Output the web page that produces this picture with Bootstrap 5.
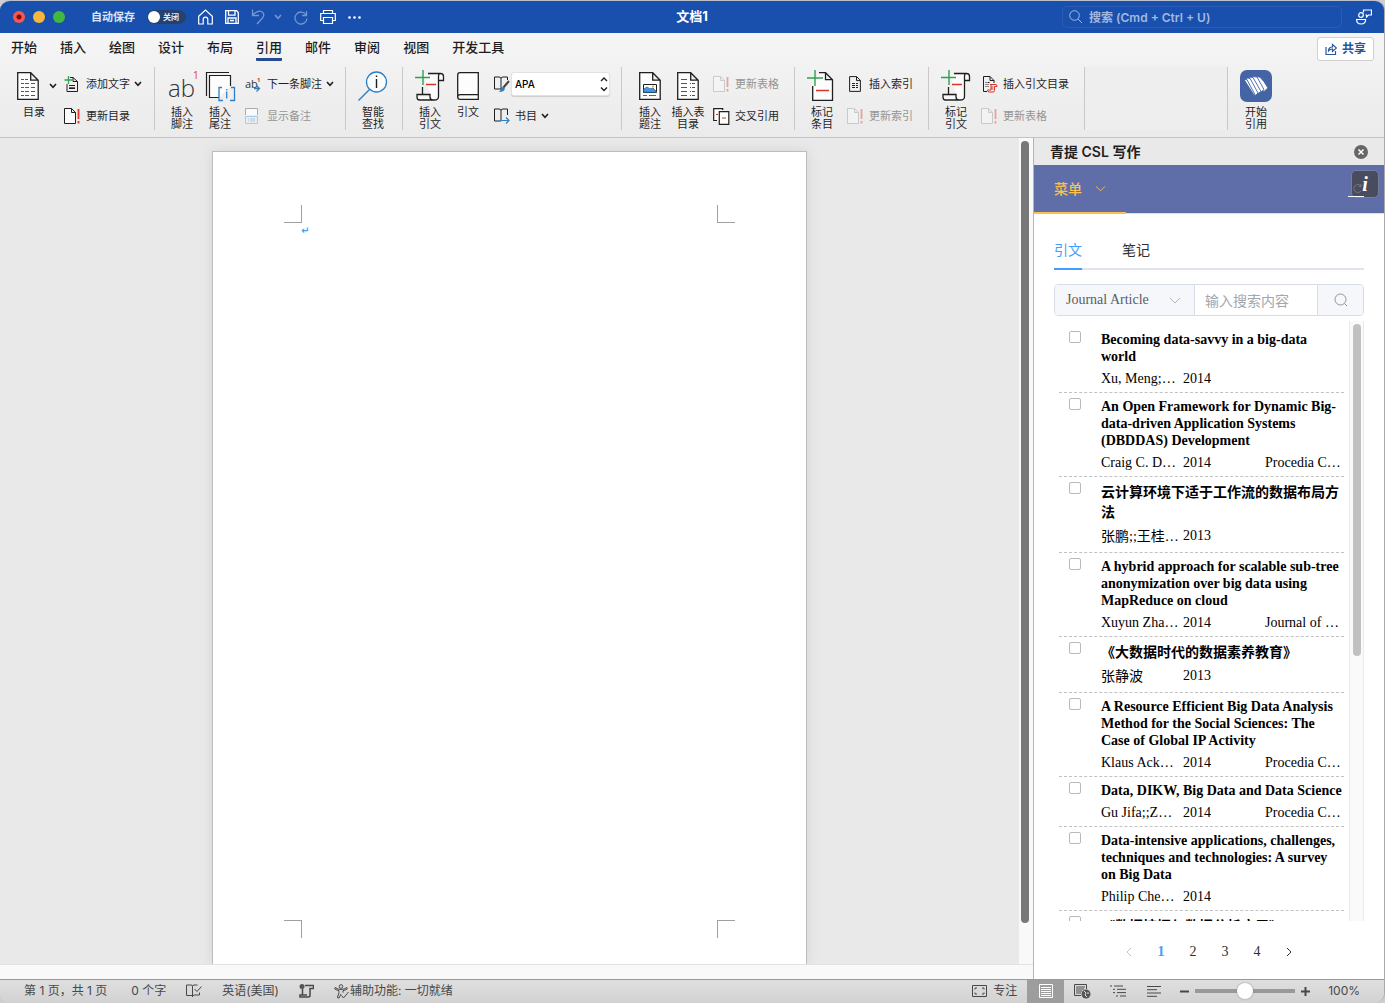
<!DOCTYPE html>
<html lang="zh-CN">
<head>
<meta charset="utf-8">
<meta name="viewport" content="width=device-width, initial-scale=1">
<title>文档1</title>
<link href="https://cdn.jsdelivr.net/npm/bootstrap@5.3.0/dist/css/bootstrap.min.css" rel="stylesheet">
<style>
:root{--ink:#1f1f1f;--rule:#c9c9c9;--ui:Inter,"Noto Sans CJK SC",sans-serif;--pane:"Liberation Serif","Noto Sans CJK SC",serif}
body{font-family:var(--ui);font-size:11px;color:var(--ink);background:#cfcfcf}
svg{display:block;flex:none;fill:none}
svg:not([stroke]){stroke:currentColor}
.btn{--bs-btn-padding-x:0;--bs-btn-padding-y:0;--bs-btn-border-width:0;--bs-btn-font-size:inherit;--bs-btn-line-height:inherit;--bs-btn-color:inherit;--bs-btn-disabled-color:#949494;--bs-btn-disabled-opacity:1;--bs-btn-font-weight:inherit}
.window{height:100vh;min-height:600px;border-radius:10px;overflow:hidden;border-top:1px solid #b9c0cc;border-right:1px solid #a9a9a9}
/* title bar */
.titlebar{height:32px;background:#1950ae;color:#fff;flex:none}
.bar-side{flex:1 1 0;min-width:0}
.titlebar strong{font-size:13px}
.light{width:12px;height:12px;border-radius:50%}
.light-r{background:radial-gradient(#7c0f0b 2px,#f6574e 3px)}
.light-y{background:#f9b63c}
.light-g{background:#43b83e}
.lights{padding-left:13px;gap:8px}
.autosave{color:#dbe5f6;font-weight:600;gap:12px;margin-left:26px}
.toggle{width:39px;height:14px;border-radius:7px;background:#25426f;font-size:8px;line-height:14px;padding-left:16px;color:#e6ecf6}
.toggle input{appearance:none;position:absolute;left:1px;top:1px;width:12px;height:12px;border-radius:50%;background:#fff;margin:0}
.qat{gap:12px}
.dim{opacity:.4}
.find{width:280px;height:22px;border:1px solid #2a5cb4;border-radius:5px;gap:6px;padding-left:6px;color:#a3b9df;margin-right:14px}
.find input{border:0;background:none;outline:0;color:inherit;font-size:12px;font-weight:600;width:100%;padding:1px 0 0}
.find input::placeholder{color:#a3b9df;opacity:1}
.account{margin-right:12px}
/* ribbon */
.ribbon{background:linear-gradient(#f5f5f5,#ebebeb);border-bottom:1px solid #c4c4c4;flex:none}
.tabs{height:29px;gap:23px;padding-left:11px;font-size:13px;font-weight:500}
.tabs a{color:#1d1d1d;text-decoration:none;white-space:nowrap;border-bottom:3px solid transparent;height:28px;display:block;line-height:28px}
.tabs a.active{border-bottom-color:#274a8e;border-radius:1px}
.share{width:57px;height:24px;background:#fff;border:1px solid #d0d0d0;border-radius:3px;color:#2b5599;font-size:12px;font-weight:600;gap:5px;margin:3px 10px 0 0}
.tools{padding-top:5px;height:75px}
.tgroup{flex:none;align-items:flex-start;gap:6px;border-right:1px solid var(--rule);padding:0 15px 0 8px;height:63px}
.tgroup.menus{padding-right:11px}
.tgroup.solo{padding-right:10px}
.tgroup.first{padding:0 12px 0 17px;gap:8px}
.tgroup.styles{padding-right:11px}
.tgroup.captions{padding-left:9px}
.tgroup.last{border:0;padding-left:9px}
.tgroup.blank{width:143px;background:#eee}
.big{width:38px;line-height:12px;text-align:center}
.big.wide{width:39px}
.pic{height:38px;display:flex;align-items:center;justify-content:center;margin-bottom:1px}
.wide .pic{gap:10px}
.wide .cap{display:block;text-align:left;padding-left:6px}
.duo{padding-top:1px}
.cell{height:32px;line-height:16px;white-space:nowrap;display:flex;align-items:center}
.cell .ico{width:22px;flex:none}
.cell .chev{margin-left:4px}
.combo{width:99px;height:24px;border:1px solid #e2e2e2;border-radius:3px;background:#fff;box-shadow:0 1px 1px #ccc;margin-left:-4px}
.combo select{appearance:none;border:0;background:none;width:100%;height:100%;padding:0 3px;font-size:10px;font-weight:500;color:#000}
.combo svg{position:absolute;right:1px;top:4px;pointer-events:none}
.launch{width:32px;height:32px;border-radius:7px;background:#4464a5;display:flex;align-items:center;justify-content:center}
/* document */
.canvas-area{background:#e9e9e9;overflow:hidden}
.sheet{width:595px;background:#fff;border:1px solid #bdbdbd;border-bottom:0;margin-top:13px;padding:53px 71px 26px;box-shadow:0 0 12px #d4d4d4}
.crop{width:18px;height:18px;border:0 solid #a0a0a0}
.crop.tl{border-width:0 1px 1px 0}
.crop.tr{border-width:0 0 1px 1px}
.crop.bl{border-width:1px 1px 0 0}
.crop.br{border-width:1px 0 0 1px}
.pilcrow{font:bold 10px/15px "DejaVu Sans",sans-serif;color:#4b9cf5;padding-left:17px}
.vbar{width:14px;background:#f9f9f9;padding:3px 4px 0 2px;flex:none}
.vthumb{height:95%;border-radius:4px;background:#787878}
.hbar{height:15px;background:#f9f9f9;border-top:1px solid #e2e2e2;flex:none}
/* side pane */
.side{width:351px;flex:none;border-left:1px solid #b5b5b5;background:#fff;font-family:var(--pane);font-size:14px}
.side-head{height:27px;background:#e9e9e9;font-family:var(--ui);padding:0 16px;font-weight:600}
.side-head h1{font-size:14px;font-weight:600;margin:0;padding-top:1px}
.menu{height:49px;background:#5f6da9;border-bottom:1px solid #dcdfe8;position:relative;flex:none}
.menu .btn{color:#fdc04c;height:49px;width:92px;border-bottom:2px solid #fdc04c;border-radius:0;gap:13px;padding:1px 0 0 20px;font-weight:500}
.info{position:absolute;right:5px;top:5px;width:28px;height:28px;border:1px solid #777d9c;border-radius:5px;background:#494c5f;color:#fff;font:italic bold 20px/26px "Liberation Serif",serif;text-align:center;padding:0}
.info::before{content:"";position:absolute;left:-4px;bottom:0;width:16px;height:1px;background:#fff}
.info svg{position:absolute;left:0;top:13px;color:#777}
.pane-tabs{margin:20px 20px 0;height:36px;gap:40px;border-bottom:2px solid #dfe4ed;line-height:34px;flex:none}
.pane-tabs a{color:#303133;text-decoration:none;height:36px}
.pane-tabs a.active{color:#409eff;border-bottom:2px solid #409eff}
.query{margin:14px 20px 5px;height:32px;border:1px solid #d8dce6;border-radius:4px;overflow:hidden;flex:none}
.query .kind{width:140px;background:#f5f7fa;border-right:1px solid #d8dce6;color:#606266}
.kind select{appearance:none;border:0;background:none;width:100%;height:30px;padding:0 11px 2px;color:#5b5d62;font-size:14px}
.kind svg{position:absolute;right:13px;top:12px;pointer-events:none;color:#b4b8c0}
.query input{border:0;min-width:0;flex:1;padding:2px 10px 0;outline:0}
.query input::placeholder{color:#a3a6ad;opacity:1}
.query .btn{width:46px;background:#f5f7fa;border-left:1px solid #d8dce6;border-radius:0;color:#909399}
.results{margin:0 20px;min-height:0;overflow:hidden;flex:1}
.entries{padding:5px 5px 0;flex:1;min-width:0;list-style:none;margin:0}
.entry{border-bottom:1px dashed #c2c2c2;padding:5px 0 5px 10px;gap:20px;color:#000;line-height:17px}
.entry>div{flex:1;min-width:0}
.entry input{appearance:none;width:12px;height:12px;border:1px solid #b9b9b9;border-radius:2px;flex:none;margin:0;background:#fff}
.entry h2{font-size:14px;line-height:17px;font-weight:700;margin:0 0 5px}
.entry .facts span{width:82px;flex:none;white-space:nowrap}
.zh h2{line-height:20px;padding-top:1px;margin-bottom:4px}
.zh .facts span:first-child{line-height:20px}
.strack{width:15px;border:1px solid #ebebeb;border-width:0 1px;background:#fafafa;padding:3px 3px 0;flex:none}
.sthumb{height:332px;border-radius:4px;background:#c1c1c1;width:8px}
.pages{height:58px;flex:none;padding-top:3px}
.pages a{width:32px;line-height:28px;text-align:center;color:#303133;text-decoration:none;display:flex;justify-content:center;align-items:center}
.pages a.active{color:#409eff;font-weight:700}
/* status bar */
.status{height:24px;border-top:1px solid #999;background:linear-gradient(#dfdfdf,#d2d2d2);color:#484848;font-size:12px;line-height:22px;flex:none;white-space:nowrap;padding:0 24px}
.status>div{height:22px}
.counts{gap:20px}
.view{width:36px;height:23px;display:flex;align-items:center;justify-content:center}
.view.active{width:37px;background:#9d9d9d;color:#fff;border-radius:0}
.focus-view{gap:6px;margin-right:10px}
.zoomer{appearance:none;width:100px;height:16px;background:linear-gradient(#999,#999) center/100% 4px no-repeat;border-radius:2px;margin:0}
.zoomer::-webkit-slider-thumb{appearance:none;width:16px;height:16px;border-radius:50%;background:#fff;box-shadow:0 0 2px #888}
</style>
<script src="https://cdn.jsdelivr.net/npm/bootstrap@5.3.0/dist/js/bootstrap.bundle.min.js"></script>
</head>
<body>
<svg class="d-none">
  <symbol id="chev" viewBox="0 0 8 6"><path d="M1 1l3 3.400l3-3.400" stroke-width="1.600"/></symbol>
  <symbol id="thin-chev" viewBox="0 0 12 8"><path d="M1 1l5 5 5-5"/></symbol>
  <symbol id="update" viewBox="0 0 17 17"><path d="M.5.5h7l4 4v11H.500zM7.500.500v4h4" fill="#fbfbfb"/><path d="M14.500 1v10m0 2v2.500" stroke="#e8322b" stroke-width="1.800"/></symbol>
  <symbol id="scroll" viewBox="0 0 30 32"><path d="M8.500 4.500h17q3 0 3 3v4h-5V27q0 4.500-4 4.500H5q-3 0-3-3v-2h13v2.500q0 2.500 3 2.500" fill="#fbfbfb" stroke="none"/><path d="M13 3.500h12.500q3 0 3 3v4h-5v-4q0-3 2-3M23.500 10V26.500q0 3.500-4 3.500H4.500Q2 30 2 27v-2.500h13V27q0 3 3 3M7.500 17v7.500" stroke-width="1.300"/><path d="M8 0v15M0 7.500h15" stroke="#2fa04e" stroke-width="1.400"/><path d="M11 14.500h10" stroke="#d9342b" stroke-width="1.300"/></symbol>
  <symbol id="book" viewBox="0 0 18 18"><path d="M8 14H1.500V2H6q2 0 2 1.500V14M8 3.500Q8 2 10 2h4.500v3"/></symbol>
</svg>
<div class="window d-flex flex-column">
  <header class="titlebar d-flex align-items-center">
    <div class="bar-side d-flex align-items-center">
      <div class="lights d-flex align-items-center">
        <button class="btn light light-r" aria-label="关闭窗口"></button><button class="btn light light-y" aria-label="最小化"></button><button class="btn light light-g" aria-label="缩放"></button>
      </div>
      <label class="autosave d-flex align-items-center" for="auto"><span>自动保存</span><span class="toggle position-relative"><input type="checkbox" id="auto">关闭</span></label>
      <div class="qat d-flex align-items-center ms-2 ps-1">
        <button class="btn" aria-label="主页"><svg width="15" height="16" viewBox="0 0 15 16" stroke-width="1.200"><path d="M.700 7.200L7.500 1l6.800 6.200V15h-4.500v-4.500q0-2.300-2.300-2.300t-2.300 2.300V15H.700z"/></svg></button>
        <button class="btn" aria-label="保存"><svg width="14" height="14" viewBox="0 0 14 14" stroke-width="1.300"><path d="M.700.700h10.800l1.800 1.800v10.800H.700zM3.500.700v4.500h6.500V.700M3 13.300V8h8v5.300M5 10.500h4"/></svg></button>
        <button class="btn dim d-flex align-items-center" aria-label="撤消"><svg width="15" height="16" viewBox="0 0 15 16" stroke-width="1.300"><path d="M1.500.500v6h6.500M1.500 6Q7 1 10.500 2.500 14.500 5 11.500 9L6 15"/></svg><svg class="ms-2" width="8" height="6"><use href="#chev"/></svg></button>
        <button class="btn dim" aria-label="重做"><svg width="14" height="15" viewBox="0 0 14 15" stroke-width="1.300"><path d="M12.500 1v4.500H8M12.200 5A6 6 0 1 0 13 8.500"/></svg></button>
        <button class="btn" aria-label="打印"><svg width="16" height="14" viewBox="0 0 16 14" stroke-width="1.200"><path d="M3.500 3.500v-3h9v3M3.500 10.500H.700v-7h14.600v7h-2.800M3.500 7.500h9v6h-9z"/></svg></button>
        <button class="btn" aria-label="更多"><svg width="13" height="3" viewBox="0 0 13 3" stroke="none"><g fill="#fff"><circle cx="1.500" cy="1.500" r="1.300"/><circle cx="6.500" cy="1.500" r="1.300"/><circle cx="11.500" cy="1.500" r="1.300"/></g></svg></button>
      </div>
    </div>
    <strong>文档1</strong>
    <div class="bar-side d-flex align-items-center justify-content-end">
      <label class="find d-flex align-items-center"><svg width="14" height="14" viewBox="0 0 14 14"><circle cx="5.500" cy="5.500" r="4.800"/><path d="M9 9l4 4"/></svg><input type="search" placeholder="搜索 (Cmd + Ctrl + U)" aria-label="搜索"></label>
      <button class="btn account" aria-label="账户"><svg width="16" height="16" viewBox="0 0 16 16" stroke-width="1.200"><circle cx="5" cy="6" r="2.300"/><path d="M.600 10.500h9q0 4.500-4.500 4.500T.600 10.500zM7.500 3.500V1h8v5h-3l-2 2V6H9.500"/></svg></button>
    </div>
  </header>

  <div class="ribbon">
    <div class="d-flex justify-content-between align-items-center">
      <nav class="tabs d-flex">
        <a href="#">开始</a><a href="#">插入</a><a href="#">绘图</a><a href="#">设计</a><a href="#">布局</a><a href="#" class="active">引用</a><a href="#">邮件</a><a href="#">审阅</a><a href="#">视图</a><a href="#">开发工具</a>
      </nav>
      <button class="btn share d-flex align-items-center justify-content-center"><svg width="12" height="12" viewBox="0 0 12 12"><path d="M1 4v7.500h9.500V8M3.500 8q0-4 4-4V1.500l4 3.500-4 3.500V6q-2.500 0-4 2z" stroke-width="1.200"/></svg>共享</button>
    </div>
    <div class="tools d-flex overflow-hidden">
      <div class="tgroup first d-flex">
        <button class="btn big wide"><span class="pic"><svg width="22" height="28" viewBox="0 0 22 28"><path d="M.700.700h13l7.500 7.500V27.300H.700zM13.700.700v7.500h7.500" fill="#fdfdfd" stroke-width="1.300"/><path d="M4 7.500h3m1 0h3M4 11.500h3m1 0h4m2 0h4M4 15.500h3m1 0h4m2 0h4M4 19.500h3m1 0h4m2 0h4M4 23.500h3m1 0h4m2 0h4" stroke="#555"/></svg><svg width="8" height="6"><use href="#chev"/></svg></span><span class="cap">目录</span></button>
        <div class="duo">
          <button class="btn cell"><span class="ico"><svg width="17" height="18" viewBox="0 0 17 18"><path d="M6 2.500h3l4.500 4V16.500H3V9M9 2.500v4h4.500M5 10.500h6M5 13.500h6"/><path d="M4.500 1v8M.500 5h8" stroke="#2fa04e" stroke-width="1.300"/><path d="M5 12.500h6" stroke="#2b6cc0"/></svg></span>添加文字<svg class="chev" width="8" height="6"><use href="#chev"/></svg></button>
          <button class="btn cell"><span class="ico"><svg width="17" height="17"><use href="#update"/></svg></span>更新目录</button>
        </div>
      </div>
      <div class="tgroup menus d-flex">
        <div class="d-flex align-items-start">
          <button class="btn big"><span class="pic"><svg width="34" height="38" viewBox="0 0 34 38" stroke="none"><text x="3" y="30" font-family="Open Sans" font-weight="300" font-size="24" fill="#333">ab</text><text x="28" y="12" font-family="Open Sans" font-size="10" fill="#e03a30">1</text></svg></span>插入<br>脚注</button>
          <button class="btn big"><span class="pic"><svg width="32" height="32" viewBox="0 0 32 32"><path d="M2.500 26V2.500H25" stroke-width="1.200"/><path d="M15 27.500H5.500v-22h21V16" fill="#fdfdfd" stroke-width="1.200"/><path d="M18 17.500h-3v13h4m8-13h3.500v13H26" stroke="#2f80c3" stroke-width="1.300"/><path d="M22.700 21.500v7m0-9.500v1.300" stroke="#2f80c3" stroke-width="1.300"/></svg></span>插入<br>尾注</button>
        </div>
        <div class="duo">
          <button class="btn cell"><span class="ico"><svg width="17" height="18" viewBox="0 0 17 18" stroke="none"><text x="0" y="13" font-family="Open Sans" font-size="11" fill="#333">ab</text><text x="12" y="7" font-family="Open Sans" font-size="6" font-weight="700" fill="#e03a30">1</text><path d="M9 13.500h5m-2.500-3l3 3-3 3" stroke="#2f80c3" stroke-width="1.300"/></svg></span>下一条脚注<svg class="chev" width="8" height="6"><use href="#chev"/></svg></button>
          <button class="btn cell" disabled><span class="ico"><svg width="13" height="16" viewBox="0 0 13 16"><path d="M.500 7V.500h12V7" fill="#fafafa" stroke="#aaa"/><path d="M.500 8.500h12v7H.500zM3 11h1m1 0h5M3 13h1m1 0h5" stroke="#a9cbe9"/></svg></span>显示备注</button>
        </div>
      </div>
      <div class="tgroup solo d-flex">
        <button class="btn big"><span class="pic"><svg width="30" height="30" viewBox="0 0 30 30"><circle cx="18.500" cy="11" r="10" stroke="#2f80c3" stroke-width="1.300" fill="#fafcfe"/><path d="M11.500 18.500L.500 29.500" stroke="#2f80c3" stroke-width="1.400"/><path d="M18.500 8v9m0-12.500v1.500" stroke-width="1.400"/></svg></span>智能<br>查找</button>
      </div>
      <div class="tgroup styles d-flex">
        <div class="d-flex align-items-start">
          <button class="btn big"><span class="pic"><svg width="30" height="32"><use href="#scroll"/></svg></span>插入<br>引文</button>
          <button class="btn big"><span class="pic"><svg width="22" height="28" viewBox="0 0 22 28"><path d="M21.300 27.300H3q-2.300 0-2.300-2.300V3Q.700.700 3 .700h18.300zM21 22.700H3q-2.300 0-2.300 2.300" fill="#fdfdfd" stroke-width="1.300"/></svg></span>引文</button>
        </div>
        <div class="duo">
          <div class="cell"><span class="ico"><svg width="18" height="18" viewBox="0 0 18 18"><use href="#book" width="18" height="18"/><path d="M16 6l-6 7" stroke="#444" stroke-width="2"/><path d="M10.500 12q-3 0-3 3-.500 1.500-2 2 5 .500 6.500-3z" fill="#2f80c3" stroke="none"/></svg></span><span class="combo position-relative"><select aria-label="引文样式"><option>APA</option></select><svg width="8" height="15" viewBox="0 0 8 15"><path d="M1 4l3-3 3 3M1 10.500l3 3 3-3" stroke-width="1.400"/></svg></span></div>
          <button class="btn cell"><span class="ico"><svg width="18" height="18" viewBox="0 0 18 18"><use href="#book" width="18" height="18"/><path d="M14.500 2v6" /><path d="M7 13.500h9m-3-3l3 3-3 3" stroke="#2f80c3" stroke-width="1.200"/></svg></span>书目<svg class="chev" width="8" height="6"><use href="#chev"/></svg></button>
        </div>
      </div>
      <div class="tgroup captions d-flex">
        <div class="d-flex align-items-start">
          <button class="btn big"><span class="pic"><svg width="22" height="28" viewBox="0 0 22 28"><path d="M.700.700h13l7.500 7.500V27.300H.700zM13.700.700v7.500h7.500" fill="#fdfdfd" stroke-width="1.300"/><path d="M4.500 12.500h13v8h-13z" fill="#fff"/><path d="M5 20v-3l3-2 3 2 3-1 3 3v1z" fill="#4c97d8" stroke="#2f80c3"/><circle cx="14" cy="14.500" r="1" fill="#f0a030" stroke="none"/><path d="M4 23.500h4m2 0h7" stroke="#d9342b"/></svg></span>插入<br>题注</button>
          <button class="btn big"><span class="pic"><svg width="22" height="28" viewBox="0 0 22 28"><path d="M.700.700h13l7.500 7.500V27.300H.700zM13.700.700v7.500h7.500" fill="#fdfdfd" stroke-width="1.300"/><path d="M4 7.500h6M4 11.500h6m3 0h1m1 0h3M4 15.500h6m3 0h1m1 0h3M4 19.500h6m3 0h1m1 0h3M4 23.500h6m3 0h1m1 0h3" stroke="#555"/></svg></span><span class="text-nowrap">插入表</span><br>目录</button>
        </div>
        <div class="duo">
          <button class="btn cell" disabled><span class="ico"><svg class="dim" width="17" height="17"><use href="#update"/></svg></span>更新表格</button>
          <button class="btn cell"><span class="ico"><svg width="17" height="17" viewBox="0 0 17 17"><path d="M4 12.500H.700V.700h9V2M6.300 3.700h9.500v12.600H6.300z" fill="#fdfdfd" stroke-width="1.200"/><path d="M3 6.500h2m4 3.500h4" stroke="#d9342b" stroke-width="1.200"/></svg></span>交叉引用</button>
        </div>
      </div>
      <div class="tgroup d-flex">
        <button class="btn big"><span class="pic"><svg width="30" height="32" viewBox="0 0 30 32"><path d="M12 2.700h6.500l7 7V30.300H5.700V16M18.500 2.700v7h7" fill="#fdfdfd" stroke-width="1.300"/><path d="M8 0v16M0 8h16" stroke="#2fa04e" stroke-width="1.400"/><path d="M9 20.500h13" stroke="#d9342b" stroke-width="1.300"/></svg></span>标记<br>条目</button>
        <div class="duo">
          <button class="btn cell"><span class="ico"><svg width="15" height="16" viewBox="-2 0 15 16"><path d="M.600.600h7L11.400 4.500v10.900H.600zM7.500.600v4h4M3 7.500h3m1 0h2M3 9.500h3m1 0h2M3 11.500h3m1 0h2"/></svg></span>插入索引</button>
          <button class="btn cell" disabled><span class="ico"><svg class="dim" width="17" height="17"><use href="#update"/></svg></span>更新索引</button>
        </div>
      </div>
      <div class="tgroup d-flex">
        <button class="btn big"><span class="pic"><svg width="30" height="32"><use href="#scroll"/></svg></span>标记<br>引文</button>
        <div class="duo">
          <button class="btn cell"><span class="ico"><svg width="17" height="17" viewBox="-2 0 17 17"><path d="M4 15.500H.500V.500h6.500l4 4V7M7 .500v4h4M2.500 6.500h1m1 0h2M2.500 8.500h1m1 0h1M2.500 10.500h1m1 0h1"/><path d="M7 8.500h6q1 0 1 2h-2.500v4q0 1.500-1.500 1.500H6q-1.500 0-1.500-2h3.500V8.500M8 11h2.500M8 13h2.500" stroke="#d9342b"/></svg></span>插入引文目录</button>
          <button class="btn cell" disabled><span class="ico"><svg class="dim" width="17" height="17"><use href="#update"/></svg></span>更新表格</button>
        </div>
      </div>
      <div class="tgroup blank"></div>
      <div class="tgroup last d-flex">
        <button class="btn big"><span class="pic"><span class="launch"><svg width="26" height="22" viewBox="0 0 26 22" stroke="#4464a5" stroke-width=".9"><g fill="#fff"><path d="M11 1.200l6 1 4 4.500L25 13l-4 3.500-4-3z"/><path d="M9 1.500l5 .500 7 12.500-3 2.500-3-2z"/><path d="M6 2l4 .500 8 14-3 2-3-2z"/><path d="M3 3l4 .300 8 14.700-2.500 2.500-2-2z"/><path d="M1 4.500l3 .300 8.500 15.700L11 20z"/></g></svg></span></span>开始<br>引用</button>
      </div>
    </div>
  </div>

  <main class="d-flex flex-grow-1" style="min-height:0">
    <section class="d-flex flex-column flex-grow-1">
      <div class="d-flex flex-grow-1" style="min-height:0">
        <div class="canvas-area flex-grow-1 d-flex justify-content-center">
          <div class="sheet d-flex flex-column">
            <div class="d-flex justify-content-between"><span class="crop tl"></span><span class="crop tr"></span></div>
            <div class="pilcrow">↵</div>
            <div class="d-flex justify-content-between mt-auto"><span class="crop bl"></span><span class="crop br"></span></div>
          </div>
        </div>
        <div class="vbar"><div class="vthumb"></div></div>
      </div>
      <div class="hbar"></div>
    </section>

    <aside class="side d-flex flex-column">
      <div class="side-head d-flex align-items-center justify-content-between flex-shrink-0"><h1>青提 CSL 写作</h1><button class="btn" aria-label="关闭窗格"><svg width="14" height="14" viewBox="0 0 14 14"><circle cx="7" cy="7" r="7" fill="#666" stroke="none"/><path d="M4.500 4.500l5 5m0-5l-5 5" stroke="#fff" stroke-width="1.500"/></svg></button></div>
      <div class="menu"><button class="btn d-flex align-items-center">菜单<svg width="11" height="8"><use href="#thin-chev"/></svg></button>
        <button class="info" aria-label="信息"><svg width="10" height="10" viewBox="0 0 10 10"><path d="M9 2a4 4 0 1 0 0 5M9 0v2.500H6.500"/></svg>i</button></div>
      <nav class="pane-tabs d-flex"><a href="#" class="active">引文</a><a href="#">笔记</a></nav>
      <div class="query d-flex"><span class="kind position-relative"><select aria-label="文献类型"><option>Journal Article</option></select><svg width="12" height="8"><use href="#thin-chev"/></svg></span><input type="text" placeholder="输入搜索内容" aria-label="搜索内容"><button class="btn d-flex align-items-center justify-content-center" aria-label="搜索"><svg width="14" height="14" viewBox="0 0 14 14"><circle cx="6.500" cy="6.500" r="5.500"/><path d="M10.500 10.500l2.500 2.500"/></svg></button></div>
      <div class="results d-flex">
        <ul class="entries">
          <li class="entry d-flex"><input type="checkbox" id="e1"><div><h2><label for="e1">Becoming data-savvy in a big-data world</label></h2><div class="facts d-flex"><span>Xu, Meng;…</span><span>2014</span></div></div></li>
          <li class="entry d-flex"><input type="checkbox" id="e2"><div><h2><label for="e2">An Open Framework for Dynamic Big-data-driven Application Systems (DBDDAS) Development</label></h2><div class="facts d-flex"><span>Craig C. D…</span><span>2014</span><span>Procedia C…</span></div></div></li>
          <li class="entry zh d-flex"><input type="checkbox" id="e3"><div><h2><label for="e3">云计算环境下适于工作流的数据布局方法</label></h2><div class="facts d-flex"><span>张鹏;;王桂…</span><span>2013</span></div></div></li>
          <li class="entry d-flex"><input type="checkbox" id="e4"><div><h2><label for="e4">A hybrid approach for scalable sub-tree anonymization over big data using MapReduce on cloud</label></h2><div class="facts d-flex"><span>Xuyun Zha…</span><span>2014</span><span>Journal of …</span></div></div></li>
          <li class="entry zh d-flex"><input type="checkbox" id="e5"><div><h2><label for="e5">《大数据时代的数据素养教育》</label></h2><div class="facts d-flex"><span>张静波</span><span>2013</span></div></div></li>
          <li class="entry d-flex"><input type="checkbox" id="e6"><div><h2><label for="e6">A Resource Efficient Big Data Analysis Method for the Social Sciences: The Case of Global IP Activity</label></h2><div class="facts d-flex"><span>Klaus Ack…</span><span>2014</span><span>Procedia C…</span></div></div></li>
          <li class="entry d-flex"><input type="checkbox" id="e7"><div><h2><label for="e7">Data, DIKW, Big Data and Data Science</label></h2><div class="facts d-flex"><span>Gu Jifa;;Z…</span><span>2014</span><span>Procedia C…</span></div></div></li>
          <li class="entry d-flex"><input type="checkbox" id="e8"><div><h2><label for="e8">Data-intensive applications, challenges, techniques and technologies: A survey on Big Data</label></h2><div class="facts d-flex"><span>Philip Che…</span><span>2014</span></div></div></li>
          <li class="entry zh d-flex"><input type="checkbox" id="e9"><div><h2><label for="e9">《数据挖掘与数据分析应用》</label></h2></div></li>
        </ul>
        <div class="strack"><div class="sthumb"></div></div>
      </div>
      <nav class="pages d-flex justify-content-center align-items-center" aria-label="分页"><a href="#" aria-label="上一页"><svg width="6" height="10" viewBox="0 0 6 10" color="#c0c4cc"><path d="M5 1L1 5l4 4"/></svg></a><a href="#" class="active">1</a><a href="#">2</a><a href="#">3</a><a href="#">4</a><a href="#" aria-label="下一页"><svg width="6" height="10" viewBox="0 0 6 10"><path d="M1 1l4 4-4 4"/></svg></a></nav>
    </aside>
  </main>

  <footer class="status d-flex align-items-start justify-content-between">
    <div class="counts d-flex align-items-center">
      <span class="pe-1">第 1 页，共 1 页</span><span>0 个字</span>
      <button class="btn" aria-label="校对"><svg width="16" height="14" viewBox="0 0 16 14"><path d="M6.500 11.500H.500V1H5q1.500 0 1.500 1.500v10.500M6.500 2.500Q6.500 1 8 1h3.500M6.500 12l1.500-1h5.500V8.500M8.500 5l2.500 2.500L15.500 2.500"/></svg></button>
      <span>英语(美国)</span>
      <button class="btn" aria-label="宏"><svg width="15" height="14" viewBox="0 0 15 14"><circle cx="3" cy="2.500" r="2.500" fill="#555" stroke="none"/><path d="M6 1.500h8.500v3H11v7q0 1.500-2 1.500H1v-2h7M3.500 5v6" stroke-width="1.500"/></svg></button>
      <button class="btn d-flex align-items-center"><svg width="16" height="15" viewBox="0 0 16 15"><circle cx="7" cy="2.500" r="1.800"/><path d="M1 3.500q-1 1.500 1 2.200l3 1v2L3.500 13q0 1.500 1.500 1l2-4M13 3.500q1 1.500-1 2.200l-3 1v2M7.500 11.500l2 2.500 5-6M1 3.500q3 2 6 2t6-2"/></svg>辅助功能: 一切就绪</button>
    </div>
    <div class="d-flex align-items-center">
      <button class="btn focus-view d-flex align-items-center"><svg width="15" height="12" viewBox="0 0 15 12"><path d="M.500.500h14v11H.500zM3 4.500V3h2m5 0h2v1.500M3 7.500V9h2m5 0h2V7.500"/></svg>专注</button>
      <button class="btn view active" aria-label="页面视图"><svg width="14" height="14" viewBox="0 0 14 14"><path d="M.500.500h13v13H.500zM2 3.500h10M2 5.500h10M2 7.500h10M2 9.500h10M2 11.500h10"/></svg></button>
      <button class="btn view" aria-label="Web 视图"><svg width="17" height="15" viewBox="0 0 17 15"><path d="M7 11.500H.500V.500h12V5M2 3h9M2 5h8M2 7h6M2 9h5"/><circle cx="12" cy="10" r="4.500" fill="#555" stroke="none"/><path d="M10 7l2 2-1 2 2 2m1-5v2" stroke="#ddd"/></svg></button>
      <button class="btn view" aria-label="大纲"><svg width="16" height="12" viewBox="0 0 16 12"><path d="M0 1h2m2 0h9M3 4.300h2m2 0h9M3 7.600h2m2 0h9M6 11h2m2 0h6"/></svg></button>
      <button class="btn view" aria-label="草稿"><svg width="14" height="11" viewBox="0 0 14 11"><path d="M0 .500h14M0 3.700h10M0 7h14M0 10.300h10"/></svg></button>
      <div class="d-flex align-items-center" style="gap:6px"><button class="btn ms-2" aria-label="缩小"><svg width="9" height="3" viewBox="0 0 9 3"><path d="M0 1.500h9" stroke-width="2"/></svg></button><input class="zoomer" type="range" min="0" max="100" value="50" aria-label="显示比例"><button class="btn" aria-label="放大"><svg width="9" height="9" viewBox="0 0 9 9"><path d="M0 4.500h9M4.500 0v9" stroke-width="2"/></svg></button><span class="ms-2 ps-1">100%</span></div>
    </div>
  </footer>
</div>
</body>
</html>
